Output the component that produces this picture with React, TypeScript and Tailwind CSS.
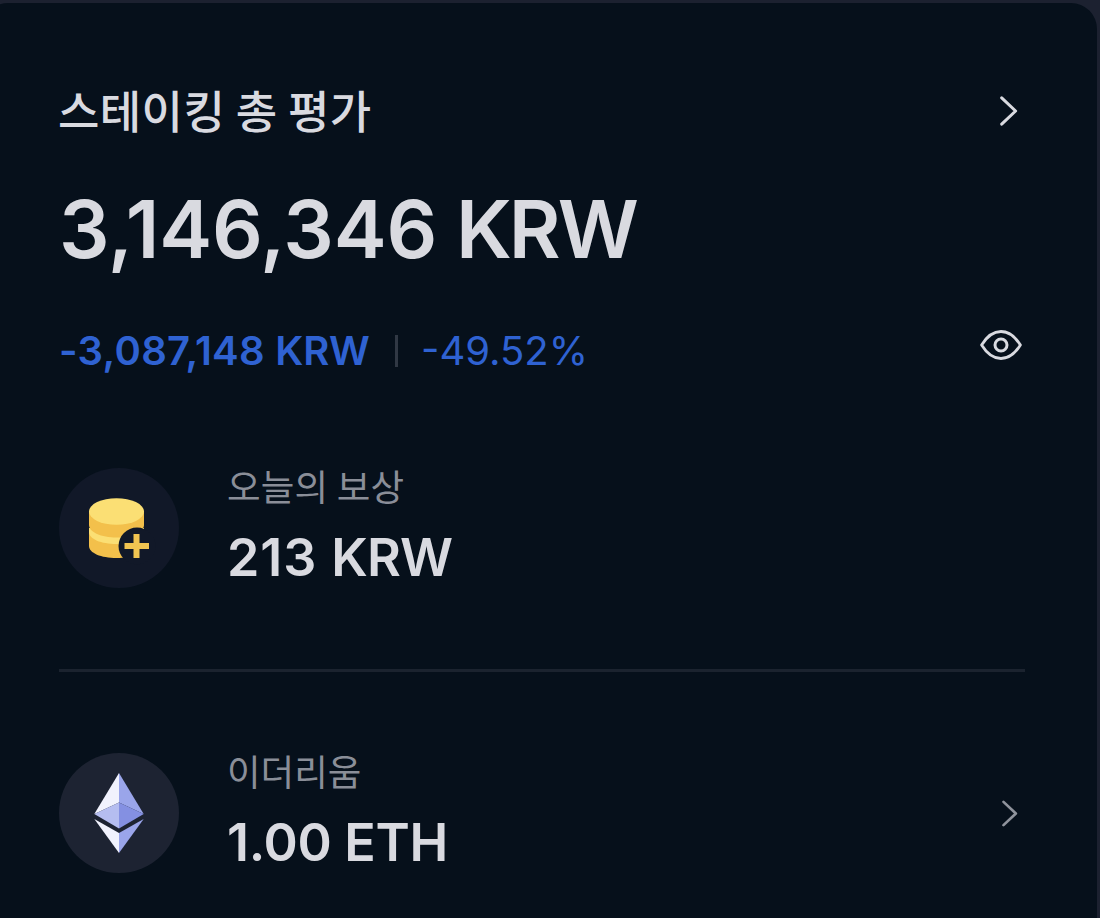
import React from "react";

function Chevron({ className }: { className: string }) {
  return (
    <svg viewBox="0 0 18 30" fill="none" className={className}>
      <path
        d="M1.7 1.9 15.6 15 1.7 28.1"
        stroke="currentColor"
        strokeWidth="3"
        strokeLinecap="round"
        strokeLinejoin="round"
      />
    </svg>
  );
}

function EyeIcon() {
  return (
    <svg viewBox="0 0 42 32" fill="none" className="w-[42px] h-8 text-[#d9dae0]">
      <path
        d="M1.6 16C6.8 7.6 13.4 2.5 21 2.5S35.2 7.6 40.4 16C35.2 24.4 28.6 29.5 21 29.5S6.8 24.4 1.6 16Z"
        stroke="currentColor"
        strokeWidth="2.8"
        strokeLinejoin="round"
      />
      <circle cx="21" cy="16" r="6" stroke="currentColor" strokeWidth="3" />
    </svg>
  );
}

function CoinIcon() {
  return (
    <svg viewBox="0 0 120 120" className="w-[120px] h-[120px]">
      {/* Lower coin */}
      <path d="M30 62V78C30 85 42 90 57.5 90S85 85 85 78V62Z" fill="#f3c04b" />
      <path d="M30 60V64C30 71 42 76 57.5 76S85 71 85 64V60Z" fill="#fbdf74" />
      {/* Upper coin */}
      <path d="M30 43V57C30 64 42 69.5 57.5 69.5S85 64 85 57V43Z" fill="#f3c04b" />
      <ellipse cx="57.5" cy="43.5" rx="27.5" ry="13.3" fill="#fbdf74" />
      {/* Plus badge */}
      <circle cx="78" cy="78" r="18.5" fill="#111828" />
      <path d="M74.5 66H80.5V75H90V81H80.5V90H74.5V81H65.5V75H74.5Z" fill="#f1c451" />
    </svg>
  );
}

function EthIcon() {
  return (
    <svg viewBox="0 0 120 120" className="w-[120px] h-[120px]">
      <path d="M60 20 35.3 61 60 49.5Z" fill="#f1f2fd" />
      <path d="M60 20 84.7 61 60 49.5Z" fill="#9aa5ea" />
      <path d="M60 49.5 35.3 61 60 75.5Z" fill="#b5bdf0" />
      <path d="M60 49.5 84.7 61 60 75.5Z" fill="#8490e2" />
      <path d="M35.3 66 60 80V100Z" fill="#f1f2fd" />
      <path d="M84.7 66 60 80V100Z" fill="#9aa5ea" />
    </svg>
  );
}

export default function App() {
  return (
    <main className="w-[1100px] h-[918px] bg-[#1c2130] pt-[3px] pr-[3px] overflow-hidden font-['Inter','Noto_Sans_CJK_KR',sans-serif] text-[#d9dae0]">
      <section className="-ml-[18px] h-[915px] rounded-t-[26px] bg-[#06101b] pl-[77px] pr-[72px] pt-[73px]">

        {/* Title */}
        <header className="flex items-center justify-between h-[70px]">
          <h1 className="-ml-px -mt-[2px] font-['Noto_Sans_CJK_KR',sans-serif] text-[45px] leading-[70px] tracking-[0.4px] font-medium whitespace-nowrap">
            스테이킹 총 평가
          </h1>
          <Chevron className="w-[18px] h-[30px] mr-[7px]" />
        </header>

        {/* Total value */}
        <p className="mt-[33px] text-[79.5px] leading-[100px] tracking-[-0.2px] font-semibold whitespace-nowrap">
          3,146,346 <span className="-ml-px tracking-[-3px]">KRW</span>
        </p>

        {/* Profit and loss */}
        <div className="mt-[41px] flex items-center justify-between h-[60px]">
          <div className="flex items-center mt-px text-[#2f62d2] text-[40px] leading-[60px] whitespace-nowrap">
            <span className="font-semibold w-[336px] tracking-[0.3px]">
              -3,087,148 <span className="tracking-[-0.3px]">KRW</span>
            </span>
            <span className="w-[3px] h-8 bg-[#303844]" />
            <span className="ml-[23px]">-49.52%</span>
          </div>
          <div className="mr-[3px] mb-[10px]">
            <EyeIcon />
          </div>
        </div>

        {/* Today's reward */}
        <div className="mt-[88px] flex items-center h-[120px]">
          <div className="w-[120px] h-[120px] rounded-full bg-[#111828]">
            <CoinIcon />
          </div>
          <div className="ml-12 whitespace-nowrap">
            <p className="font-['Noto_Sans_CJK_KR',sans-serif] -mt-[2px] text-[36.5px] leading-[50px] tracking-[0.2px] text-[#8a8e98]">
              오늘의 보상
            </p>
            <p className="mt-3 text-[52px] leading-[70px] font-semibold">
              <span className="tracking-[0.9px]">213 </span>
              <span className="tracking-[-0.8px]">KRW</span>
            </p>
          </div>
        </div>

        <hr className="mt-[81px] border-0 h-[3px] bg-[#1b232f]" />

        {/* Ethereum */}
        <div className="mt-[81px] flex items-center h-[120px]">
          <div className="w-[120px] h-[120px] rounded-full bg-[#1d2332]">
            <EthIcon />
          </div>
          <div className="ml-12 whitespace-nowrap">
            <p className="font-['Noto_Sans_CJK_KR',sans-serif] -mt-[2px] text-[36.5px] leading-[50px] text-[#8a8e98]">
              이더리움
            </p>
            <p className="mt-3 text-[52px] leading-[70px] tracking-[-0.3px] font-semibold">1.00 ETH</p>
          </div>
          <Chevron className="w-4 h-[27px] ml-auto mr-[7px] text-[#8f939c]" />
        </div>
      </section>
    </main>
  );
}
